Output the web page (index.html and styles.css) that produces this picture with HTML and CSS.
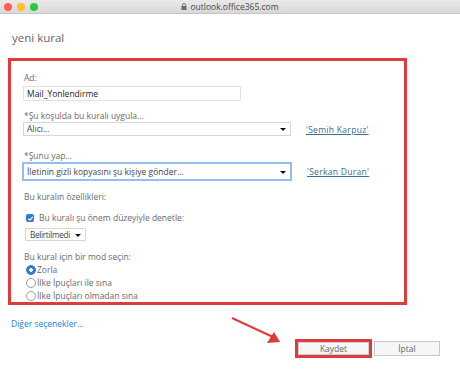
FILE: index.html
```html
<!DOCTYPE html>
<html lang="tr">
<head>
    <meta charset="UTF-8">
    <title>yeni kural</title>
    <link rel="stylesheet" href="styles.css">
</head>
<body>

    <header class="titlebar">
        <div class="lights">
            <span class="light red"></span>
            <span class="light yellow"></span>
            <span class="light green"></span>
        </div>
        <div class="url">
            <svg class="lock" width="6" height="7" viewBox="0 0 6 7"><path d="M1.5 3V2a1.5 1.5 0 0 1 3 0v1" fill="none" stroke="#6b6b6b" stroke-width="0.9"/><rect x="0.5" y="3" width="5" height="4" rx="0.6" fill="#6b6b6b"/></svg>
            outlook.office365.com
        </div>
        <div></div>
    </header>

    <main class="page">
        <h1 class="page-title">yeni kural</h1>

        <section class="rule-box">
            <div class="field-label first">Ad:</div>
            <input class="text-input" type="text" value="Mail_Yonlendirme">

            <div class="field-label cond">*Şu koşulda bu kuralı uygula...</div>
            <div class="select-row">
                <div class="select wide">Alıcı...<span class="caret"></span></div>
                <a href="#" class="person">'Semih Karpuz'</a>
            </div>

            <div class="field-label gap">*Şunu yap...</div>
            <div class="select-row">
                <div class="select wide focused">İletinin gizli kopyasını şu kişiye gönder...<span class="caret"></span></div>
                <a href="#" class="person">'Serkan Duran'</a>
            </div>

            <div class="field-label props">Bu kuralın özellikleri:</div>
            <label class="check-row">
                <span class="checkbox"><svg width="7" height="7" viewBox="0 0 7 7"><path d="M1.2 3.6l1.6 1.6 3-3.4" fill="none" stroke="#fff" stroke-width="1.2"/></svg></span>
                Bu kuralı şu önem düzeyiyle denetle:
            </label>
            <div class="select small">Belirtilmedi<span class="caret"></span></div>

            <div class="field-label mode">Bu kural için bir mod seçin:</div>
            <label class="radio-row"><span class="radio on"></span>Zorla</label>
            <label class="radio-row"><span class="radio"></span>İlke İpuçları ile sına</label>
            <label class="radio-row"><span class="radio"></span>İlke İpuçları olmadan sına</label>
        </section>

        <a href="#" class="more-link">Diğer seçenekler...</a>

        <div class="actions">
            <div class="highlight"><button class="btn">Kaydet</button></div>
            <button class="btn cancel">İptal</button>
        </div>

        <!-- annotation arrow pointing at the save button -->
        <svg class="pointer" width="60" height="30" viewBox="0 0 60 30">
            <path d="M1 1 L42 20" stroke="#e03a3a" stroke-width="2" fill="none"/>
            <path d="M49 25 L36 26 L43 15 Z" fill="#e03a3a"/>
        </svg>
    </main>

</body>
</html>
```

FILE: styles.css
```css
:root {
    --label: #6a6a6a;
    --text: #444444;
    --border: #d6d6d6;
    --red: #e03a3a;
    --link: #3d6b93;
    --blue: #2b7cd8;
}

body {
    margin: 0;
    background: #ffffff;
    font-family: "Open Sans", "Noto Sans", sans-serif;
    font-size: 8.5px;
    color: var(--text);
    width: 460px;
    height: 378px;
    overflow: hidden;
}

.titlebar {
    height: 13px;
    display: grid;
    grid-template-columns: 1fr auto 1fr;
    align-items: center;
    background: linear-gradient(#e9e9e9, #d8d8d8);
    border-bottom: 1px solid #c6c6c6;
}
.lights { display: flex; gap: 5px; padding-left: 4px; }
.light { width: 8px; height: 8px; border-radius: 50%; }
.light.red { background: #fd5f57; }
.light.yellow { background: #febc2e; }
.light.green { background: #28c840; }
.url { display: flex; align-items: center; gap: 3px; font-size: 8.5px; color: #4a4a4a; }

.page { position: relative; padding: 0; }

.page-title {
    margin: 0;
    padding: 17px 0 0 12px;
    font-size: 11.5px;
    font-weight: 400;
    color: #666;
    line-height: 14px;
}

.rule-box {
    margin: 13px 0 0 8px;
    width: 380px;
    height: 241px;
    border: 3px solid var(--red);
    padding: 0 0 0 13px;
    box-sizing: content-box;
}

.field-label { color: var(--label); line-height: 12px; }
.field-label.first { margin-top: 11px; }
.field-label.cond { margin-top: 9px; }
.field-label.gap { margin-top: 14px; }
.field-label.props { margin-top: 10px; }
.field-label.mode { margin-top: 10px; }

.text-input {
    display: block;
    margin: 2px 0 0 -1px;
    width: 218px;
    height: 15px;
    box-sizing: border-box;
    border: 1px solid #e2e2e2;
    padding: 0 3px;
    font: inherit;
    color: #222;
    text-decoration: underline wavy #e88;
    text-decoration-thickness: 0.5px;
}

.select-row { display: flex; align-items: center; gap: 15px; }
.select {
    position: relative;
    height: 14px;
    box-sizing: border-box;
    border: 1px solid var(--border);
    padding: 0 3px;
    line-height: 12px;
    color: var(--text);
}
.select.wide { width: 268px; margin-left: -1px; }
.select.focused {
    height: 19px;
    line-height: 15px;
    width: 270px;
    margin-left: -2px;
    border: 2px solid #92bdf5;
}
.select.small {
    width: 61px;
    height: 13px;
    margin: 4px 0 0 1px;
    padding-left: 4px;
    font-size: 8.2px;
    letter-spacing: -0.3px;
    line-height: 11px;
}
.caret {
    position: absolute;
    right: 4px;
    top: 50%;
    margin-top: -1px;
    border-left: 3px solid transparent;
    border-right: 3px solid transparent;
    border-top: 3px solid #111;
}
.person { color: var(--link); text-decoration: underline; letter-spacing: 0.3px; }

.check-row { display: flex; align-items: center; gap: 5px; margin-top: 9px; margin-left: 2px; color: var(--label); line-height: 12px; }
.checkbox {
    width: 8px; height: 8px;
    border-radius: 2px;
    background: var(--blue);
    display: flex; align-items: center; justify-content: center;
}

.radio-row { display: flex; align-items: center; gap: 1px; margin-left: 2px; color: var(--label); line-height: 13px; }
.radio {
    width: 8px; height: 8px;
    border-radius: 50%;
    border: 1px solid #9a9a9a;
    background: #fff;
}
.radio.on {
    border-color: var(--blue);
    background: radial-gradient(circle, #fff 0 1.6px, var(--blue) 2px);
}

.more-link {
    display: block;
    margin: 13px 0 0 11px;
    color: var(--blue);
    text-decoration: none;
    line-height: 12px;
}

.actions {
    display: flex;
    justify-content: flex-end;
    align-items: center;
    gap: 2px;
    margin: 9px 20px 0 0;
}
.highlight { border: 3px solid var(--red); }
.btn {
    display: block;
    width: 71px;
    height: 13px;
    border: 1px solid #d0d0d0;
    background: #f6f6f6;
    font: inherit;
    color: #666;
    padding: 0;
    line-height: 11px;
}
.btn.cancel { width: 66px; height: 15px; border-color: #c8c8c8; }

.pointer { position: absolute; left: 231px; top: 303px; }
```
